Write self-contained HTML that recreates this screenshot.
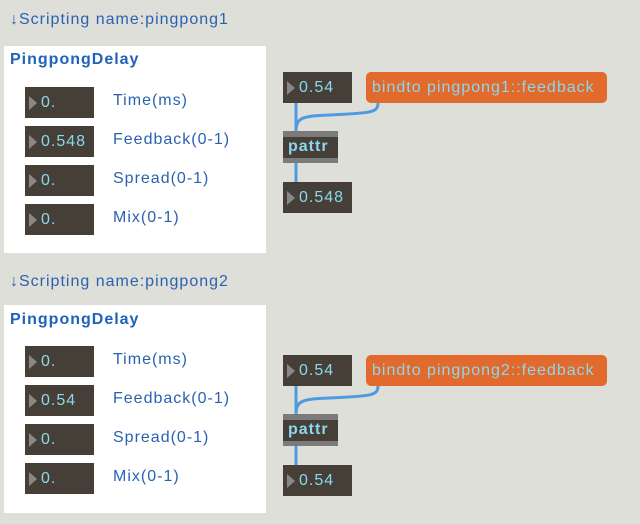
<!DOCTYPE html>
<html><head><meta charset="utf-8"><style>
body{margin:0;width:640px;height:524px;background:#dfdfd9;position:relative;overflow:hidden;font-family:"Liberation Sans",sans-serif;letter-spacing:1px}
.a{position:absolute}
.hdr{color:#2a62b0;font-size:16px}
.panel{background:#fff;left:4px;width:262px}
.title{color:#1f62b8;font-weight:bold;font-size:16px;left:10px}
.nb{background:#463f37;width:69px;height:31px;color:#8ad8ee;font-size:16px;line-height:31px;box-sizing:border-box;padding-left:16px}
.nb:before{content:"";position:absolute;left:4px;top:9px;border-left:8px solid #888;border-top:7px solid transparent;border-bottom:7px solid transparent}
.lbl{color:#2a62b0;font-size:16px;left:113px}
.msg{background:#e26a2c;left:366px;width:241px;height:31px;border-radius:5px;color:#8ad8ee;font-size:16px;line-height:31px;padding-left:6px;box-sizing:border-box}
.pattr{left:283px;width:55px;height:32px;background:#463f37;border-top:6px solid #7b7b7b;border-bottom:5px solid #7b7b7b;box-sizing:border-box;color:#8ad8ee;font-size:16px;line-height:20px;padding-left:5px;font-weight:bold}
</style></head><body>

<div class="a hdr" style="left:10px;top:11px">↓Scripting name:pingpong1</div>
<div class="a panel" style="top:46px;height:207px"></div>
<div class="a title" style="top:51px">PingpongDelay</div>
<div class="a nb" style="left:25px;top:87px">0.</div><div class="a lbl" style="top:92px">Time(ms)</div>
<div class="a nb" style="left:25px;top:126px">0.548</div><div class="a lbl" style="top:131px">Feedback(0-1)</div>
<div class="a nb" style="left:25px;top:165px">0.</div><div class="a lbl" style="top:170px">Spread(0-1)</div>
<div class="a nb" style="left:25px;top:204px">0.</div><div class="a lbl" style="top:209px">Mix(0-1)</div>

<svg class="a" style="left:0;top:0" width="640" height="524">
<g fill="none" stroke="#4f9be0" stroke-width="3">
<path d="M296 103 V133"/><path d="M296 133 C296 118 300 116 330 115 C370 113 378 113 378 103"/><path d="M296 163 V182"/>
<path d="M296 386 V416"/><path d="M296 416 C296 401 300 399 330 398 C370 396 378 396 378 386"/><path d="M296 445 V465"/>
</g></svg>

<div class="a nb" style="left:283px;top:72px">0.54</div>
<div class="a msg" style="top:72px">bindto pingpong1::feedback</div>
<div class="a pattr" style="top:131px">pattr</div>
<div class="a nb" style="left:283px;top:182px">0.548</div>

<div class="a hdr" style="left:10px;top:273px">↓Scripting name:pingpong2</div>
<div class="a panel" style="top:305px;height:208px"></div>
<div class="a title" style="top:311px">PingpongDelay</div>
<div class="a nb" style="left:25px;top:346px">0.</div><div class="a lbl" style="top:351px">Time(ms)</div>
<div class="a nb" style="left:25px;top:385px">0.54</div><div class="a lbl" style="top:390px">Feedback(0-1)</div>
<div class="a nb" style="left:25px;top:424px">0.</div><div class="a lbl" style="top:429px">Spread(0-1)</div>
<div class="a nb" style="left:25px;top:463px">0.</div><div class="a lbl" style="top:468px">Mix(0-1)</div>

<div class="a nb" style="left:283px;top:355px">0.54</div>
<div class="a msg" style="top:355px">bindto pingpong2::feedback</div>
<div class="a pattr" style="top:414px">pattr</div>
<div class="a nb" style="left:283px;top:465px">0.54</div>
</body></html>
